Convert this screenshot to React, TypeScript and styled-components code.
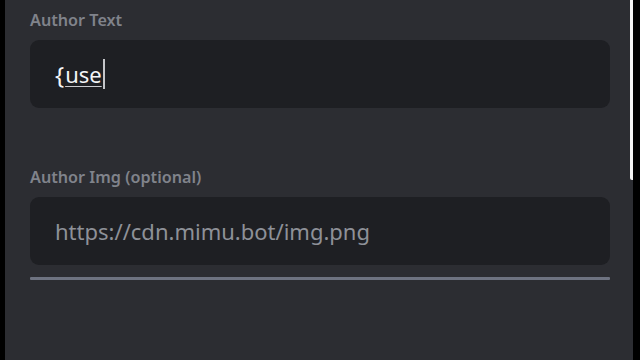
import React from "react";
import styled, { createGlobalStyle } from "styled-components";

const Global = createGlobalStyle`
  html, body { margin: 0; padding: 0; background: #000; }
  body { width: 640px; height: 360px; overflow: hidden; font-family: "Noto Sans", "Open Sans", sans-serif; }
`;

const Frame = styled.div`
  width: 640px;
  height: 360px;
  display: flex;
  background: #000;
`;

const Panel = styled.div`
  margin-left: 5px;
  width: 628px;
  height: 360px;
  background: #2c2d32;
  position: relative;
  display: flex;
  flex-direction: column;
  padding: 10px 23px 0 25px;
  box-sizing: border-box;
`;

const ScrollThumb = styled.div`
  position: absolute;
  right: 0;
  top: 0;
  width: 3px;
  height: 180px;
  background: #f4f4f4;
  border-bottom-left-radius: 2px;
`;

const Field = styled.div<{ $gap?: number }>`
  display: flex;
  flex-direction: column;
  margin-bottom: ${(p) => p.$gap ?? 0}px;
`;

const Label = styled.div`
  font-size: 16.2px;
  font-weight: 600;
  color: #80838b;
  height: 20px;
  line-height: 20px;
  margin-bottom: 10px;
`;

const Input = styled.div`
  height: 68px;
  border-radius: 9px;
  background: #1e1f23;
  display: flex;
  align-items: center;
  padding-left: 25px;
  font-size: 22px;
  color: #dcdde0;
`;

const Typed = styled.span`
  color: #f4f5f7;
  display: flex;
  align-items: center;
`;

const Brace = styled.span`
  font-size: 24px;
  margin-right: 1px;
`;

const Composing = styled.span`
  text-decoration: underline;
  text-decoration-color: #c9cace;
  text-decoration-thickness: 1px;
  text-underline-offset: 3px;
`;

const Caret = styled.span`
  display: inline-block;
  width: 2px;
  height: 30px;
  background: #c4c5c9;
  margin-left: 1px;
`;

const Placeholder = styled.span`
  color: #8e9198;
`;

const Divider = styled.div`
  height: 3px;
  margin-top: 12px;
  background: #6e7381;
  border-radius: 1px;
`;

export default function App() {
  return (
    <>
      <Global />
      <Frame>
        <Panel>
          <ScrollThumb />
          <Field $gap={59}>
            <Label>Author Text</Label>
            <Input>
              <Typed>
                <Brace>{"{"}</Brace>
                <Composing>use</Composing>
                <Caret />
              </Typed>
            </Input>
          </Field>
          <Field>
            <Label>Author Img (optional)</Label>
            <Input>
              <Placeholder>https://cdn.mimu.bot/img.png</Placeholder>
            </Input>
            <Divider />
          </Field>
        </Panel>
      </Frame>
    </>
  );
}
